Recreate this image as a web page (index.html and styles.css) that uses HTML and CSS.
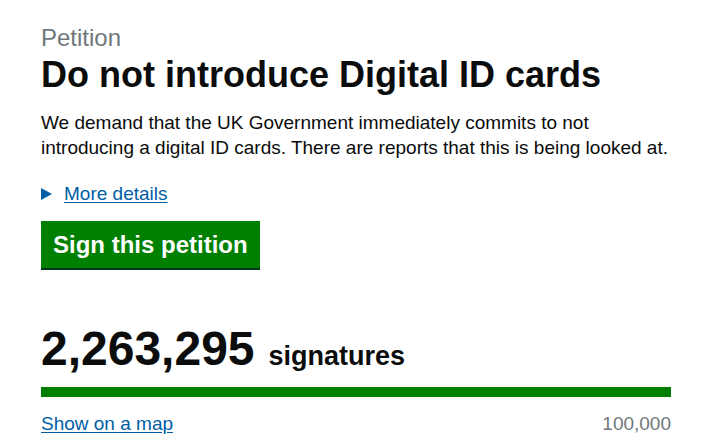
FILE: index.html
```html
<!DOCTYPE html>
<html lang="en">
<head>
<meta charset="utf-8">
<title>Petition</title>
<link rel="stylesheet" href="styles.css">
</head>
<body>
<main class="page">
  <p class="kicker">Petition</p>
  <h1 class="title">Do not introduce Digital ID cards</h1>
  <p class="lede">We demand that the UK Government immediately commits to not introducing a digital ID cards. There are reports that this is being looked at.</p>
  <details class="more">
    <summary class="more-summary"><span class="arrow"></span><span class="more-link">More details</span></summary>
  </details>
  <a class="button" href="#">Sign this petition</a>
  <div class="count">
    <span class="count-number">2,263,295</span>
    <span class="count-label">signatures</span>
  </div>
  <div class="progress"><div class="progress-bar" style="width:100%"></div></div>
  <div class="progress-foot">
    <a class="map-link" href="#">Show on a map</a>
    <span class="threshold">100,000</span>
  </div>
</main>
</body>
</html>
```

FILE: styles.css
```css
* { box-sizing: border-box; }
html, body { margin: 0; padding: 0; background: #fff; }
body {
  font-family: "Liberation Sans", Arial, sans-serif;
  color: #0b0c0c;
}
.page {
  width: 630px;
  margin-left: 41px;
  padding-top: 23px;
}
.kicker {
  margin: 0;
  font-size: 24px;
  line-height: 30px;
  color: #6f777b;
}
.title {
  margin: 2px 0 0;
  font-size: 36px;
  line-height: 40px;
  font-weight: 700;
}
.lede {
  margin: 15px 0 0;
  font-size: 19px;
  line-height: 25px;
  width: 640px;
}
.more { margin-top: 21px; }
.more-summary {
  list-style: none;
  display: flex;
  align-items: center;
  gap: 12px;
  font-size: 19px;
  line-height: 25px;
  cursor: pointer;
}
.more-summary::-webkit-details-marker { display: none; }
.arrow {
  width: 0; height: 0;
  border-left: 11px solid #005ea5;
  border-top: 6.5px solid transparent;
  border-bottom: 6.5px solid transparent;
}
.more-link {
  color: #005ea5;
  text-decoration: underline;
  text-underline-offset: 2px;
}
.button {
  display: inline-block;
  margin-top: 15px;
  background: #008000;
  color: #fff;
  font-weight: 700;
  font-size: 24px;
  line-height: 30px;
  padding: 9px 12px 8px 12px;
  text-decoration: none;
  box-shadow: 0 2px 0 #003618;
}
.count {
  margin-top: 57px;
  display: flex;
  align-items: baseline;
  gap: 14px;
  font-weight: 700;
}
.count-number { font-size: 48px; line-height: 48px; }
.count-label { font-size: 27px; line-height: 30px; }
.progress {
  margin-top: 14px;
  height: 10px;
  background: #dee0e2;
}
.progress-bar { height: 100%; background: #008000; }
.progress-foot {
  margin-top: 14px;
  display: flex;
  justify-content: space-between;
  align-items: baseline;
  font-size: 19px;
  line-height: 25px;
}
.map-link { color: #005ea5; text-decoration: underline; text-underline-offset: 2px; }
.threshold { color: #6f777b; }
```
